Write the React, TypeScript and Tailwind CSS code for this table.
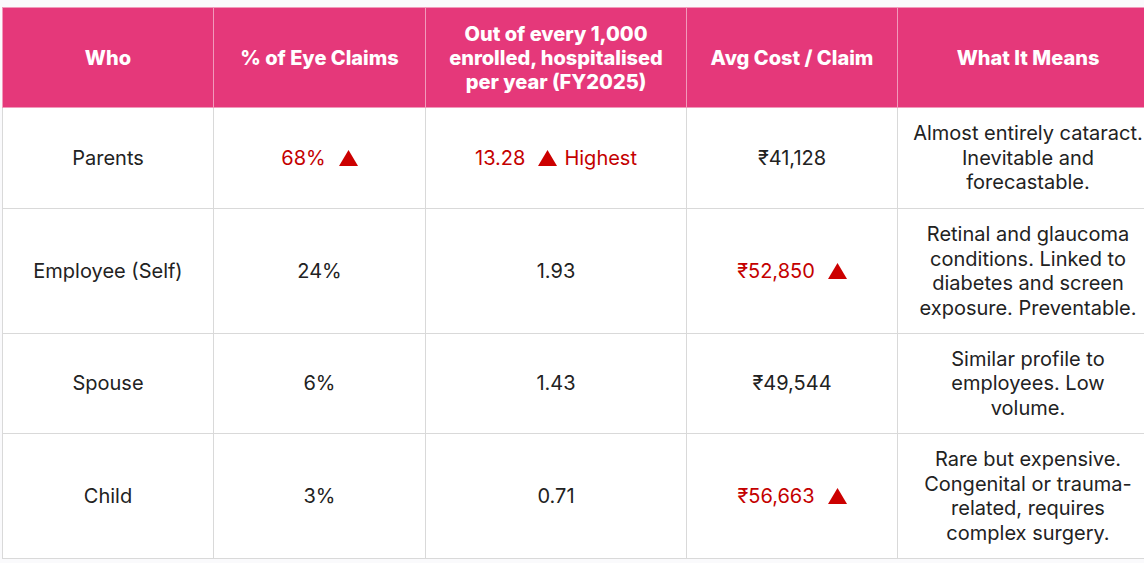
import React from "react";

type Cell = { text: string; red?: boolean; up?: boolean; after?: string };

const rows: { who: string; share: Cell; rate: Cell; cost: Cell; means: string }[] = [
  {
    who: "Parents",
    share: { text: "68%", red: true, up: true },
    rate: { text: "13.28", red: true, up: true, after: "Highest" },
    cost: { text: "₹41,128" },
    means: "Almost entirely cataract. Inevitable and forecastable.",
  },
  {
    who: "Employee (Self)",
    share: { text: "24%" },
    rate: { text: "1.93" },
    cost: { text: "₹52,850", red: true, up: true },
    means: "Retinal and glaucoma conditions. Linked to diabetes and screen exposure. Preventable.",
  },
  {
    who: "Spouse",
    share: { text: "6%" },
    rate: { text: "1.43" },
    cost: { text: "₹49,544" },
    means: "Similar profile to employees. Low volume.",
  },
  {
    who: "Child",
    share: { text: "3%" },
    rate: { text: "0.71" },
    cost: { text: "₹56,663", red: true, up: true },
    means: "Rare but expensive. Congenital or trauma-related, requires complex surgery.",
  },
];

const heights = ["h-[101px]", "h-[125px]", "h-[100px]", "h-[125px]"];

function Up() {
  return (
    <svg width="19" height="16" viewBox="0 0 19 16" className="inline-block ml-[13px] -mt-[3px]">
      <polygon points="9.5,0 19,16 0,16" fill="#cc0000" />
    </svg>
  );
}

function Value({ cell }: { cell: Cell }) {
  return (
    <span className={cell.red ? "text-[#c40000]" : ""}>
      {cell.text}
      {cell.up && <Up />}
      {cell.after && <span className="ml-[7px]">{cell.after}</span>}
    </span>
  );
}

export default function App() {
  const th = "border border-[#f19abb] bg-[#e5387a] text-white font-extrabold text-[20px] leading-[24px] px-4 text-center align-middle";
  const td = "border border-[#d9d9d9] px-4 py-[12px] text-center align-middle";

  return (
    <div
      className="w-[1144px] h-[563px] overflow-hidden bg-[#fafafc] pt-[7px] pl-[2px]"
      style={{ fontFamily: "Inter, 'Noto Sans', sans-serif" }}
    >
      <table className="border-collapse table-fixed w-[1156px] bg-white text-[#222222] text-[20px] leading-[24.5px]">
        <colgroup>
          <col className="w-[211px]" />
          <col className="w-[212px]" />
          <col className="w-[261px]" />
          <col className="w-[211px]" />
          <col className="w-[261px]" />
        </colgroup>
        <thead>
          <tr className="h-[100px]">
            <th className={th}>Who</th>
            <th className={th}>% of Eye Claims</th>
            <th className={th}>Out of every 1,000 enrolled, hospitalised per year (FY2025)</th>
            <th className={th}>Avg Cost / Claim</th>
            <th className={th}>What It Means</th>
          </tr>
        </thead>
        <tbody>
          {rows.map((r, i) => (
            <tr key={r.who} className={heights[i]}>
              <td className={td}>{r.who}</td>
              <td className={td}>
                <Value cell={r.share} />
              </td>
              <td className={td}>
                <Value cell={r.rate} />
              </td>
              <td className={td}>
                <Value cell={r.cost} />
              </td>
              <td className="border border-[#d9d9d9] px-[15px] py-[12px] text-center align-middle">{r.means}</td>
            </tr>
          ))}
        </tbody>
      </table>
    </div>
  );
}
